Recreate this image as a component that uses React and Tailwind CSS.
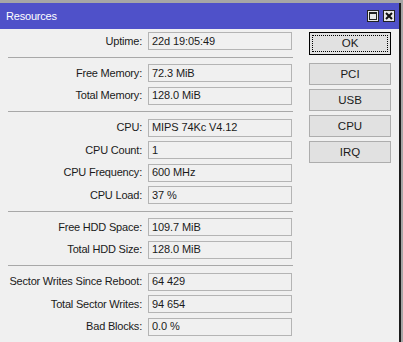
import React from 'react';

const GROUPS = [
  [['Uptime', '22d 19:05:49']],
  [
    ['Free Memory', '72.3 MiB'],
    ['Total Memory', '128.0 MiB'],
  ],
  [
    ['CPU', 'MIPS 74Kc V4.12'],
    ['CPU Count', '1'],
    ['CPU Frequency', '600 MHz'],
    ['CPU Load', '37 %'],
  ],
  [
    ['Free HDD Space', '109.7 MiB'],
    ['Total HDD Size', '128.0 MiB'],
  ],
  [
    ['Sector Writes Since Reboot', '64 429'],
    ['Total Sector Writes', '94 654'],
    ['Bad Blocks', '0.0 %'],
  ],
];

const BUTTONS = ['PCI', 'USB', 'CPU', 'IRQ'];

function Row({ label, value }) {
  return (
    <div className="flex h-[22.5px] items-center">
      <div className="w-[143px] whitespace-nowrap pr-[1px] text-right tracking-[-0.2px]">{label}:</div>
      <div className="ml-[5px] flex h-[18px] w-[144px] items-center border border-[#b4b4b4] bg-[#f0f0f0] pl-[3px] tracking-[-0.1px]">
        {value}
      </div>
    </div>
  );
}

export default function App() {
  return (
    <div
      className="h-[342px] w-[403px] overflow-hidden bg-[#a6a6a6] pt-[3px] text-[11px] text-[#1a1a1a]"
      style={{ fontFamily: '"Liberation Sans", Arial, sans-serif' }}
    >
      <div className="h-[400px] w-[401px] border-r-2 border-[#1c1c1c] bg-[#f0f0f0]">
        {/* title bar */}
        <div className="flex h-[26px] items-center justify-between bg-[#4f51c9] pl-[6px] pr-[4px] text-[11px] tracking-[-0.2px] text-white">
          <span>Resources</span>
          <span className="flex gap-[4px]">
            <span className="flex h-[12px] w-[12px] items-center justify-center border border-[#222] bg-[#e8e8e8]">
              <span className="h-[8px] w-[8px] border border-[#222] border-t-2" />
            </span>
            <span className="flex h-[12px] w-[12px] items-center justify-center border border-[#222] bg-[#e8e8e8]">
              <svg width="8" height="8" viewBox="0 0 8 8">
                <path d="M1 1L7 7M7 1L1 7" stroke="#111" strokeWidth="2" />
              </svg>
            </span>
          </span>
        </div>

        <div className="flex pt-[0.75px]">
          {/* fields */}
          <div className="w-[300px]">
            {GROUPS.map((g, gi) => (
              <div key={gi}>
                {gi > 0 && (
                  <div className="h-[9.5px] pt-[4.5px] pl-[8px]">
                    <div className="h-px w-[285px] bg-[#a8a8a8]" />
                  </div>
                )}
                {g.map(([l, v]) => (
                  <Row key={l} label={l} value={v} />
                ))}
              </div>
            ))}
          </div>

          {/* buttons */}
          <div className="ml-[9px] flex w-[82px] flex-col gap-[4px] pt-[2.5px] text-[11.5px]">
            <div className="mb-[4px] flex h-[23px] items-center justify-center border border-black bg-[#e1e1e1] p-[2px]">
              <div className="flex h-full w-full items-center justify-center border border-dotted border-black">
                OK
              </div>
            </div>
            {BUTTONS.map((b) => (
              <div
                key={b}
                className="flex h-[22px] items-center justify-center border border-[#adadad] bg-[#e1e1e1]"
              >
                {b}
              </div>
            ))}
          </div>
        </div>
      </div>
    </div>
  );
}
